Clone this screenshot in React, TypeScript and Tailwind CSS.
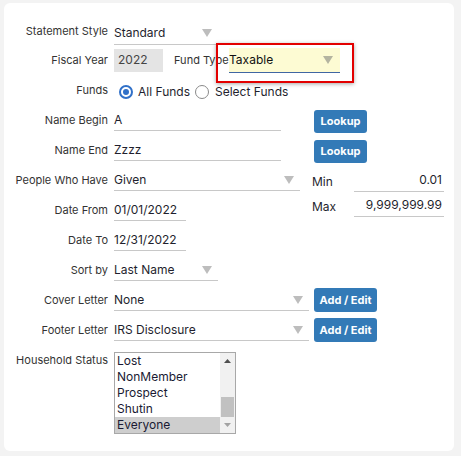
import type { ReactNode } from 'react';

const font = { fontFamily: 'Inter, "Noto Sans", sans-serif' };

function Arrow({ className = 'fill-[#bdbdbd]' }: { className?: string }) {
  return (
    <svg width="10" height="8" viewBox="0 0 10 8" className={className}>
      <polygon points="0,0 10,0 5,8" />
    </svg>
  );
}

function Row({
  label,
  children,
  className = 'h-[30px] items-center',
}: {
  label: string;
  children: ReactNode;
  className?: string;
}) {
  return (
    <div className={`flex ${className}`}>
      <div className="w-[104px] shrink-0 whitespace-nowrap text-right text-[11px] text-[#333]">
        {label}
      </div>
      <div className="ml-[6px] flex items-center">{children}</div>
    </div>
  );
}

function Field({ width, value, arrow = false }: { width: string; value: string; arrow?: boolean }) {
  return (
    <div
      className={`flex h-[22px] items-center justify-between border-b border-[#c8c8c8] pr-[6px] text-[12px] text-[#1f1f2e] ${width}`}
    >
      <span>{value}</span>
      {arrow && <Arrow />}
    </div>
  );
}

function Btn({ children, width }: { children: ReactNode; width: string }) {
  return (
    <button
      className={`flex h-[23px] items-center justify-center rounded-[3px] bg-[#337ab7] text-[11px] font-bold text-white ${width}`}
    >
      {children}
    </button>
  );
}

function Radio({ checked }: { checked?: boolean }) {
  return checked ? (
    <span className="flex h-[14px] w-[14px] items-center justify-center rounded-full border-2 border-[#3070c8] bg-white">
      <span className="h-[6px] w-[6px] rounded-full bg-[#3070c8]" />
    </span>
  ) : (
    <span className="block h-[14px] w-[14px] rounded-full border border-[#8a8a8a] bg-white" />
  );
}

const statuses = ['Lost', 'NonMember', 'Prospect', 'Shutin', 'Everyone'];

export default function App() {
  return (
    <div className="h-[456px] w-[461px] bg-[#f3f3f3] pl-[4px] pt-[3px]" style={font}>
      <div className="h-[448px] w-[450px] rounded-[6px] bg-white pt-[15px]">
        <Row label="Statement Style" className="h-[27px] items-center">
          <div className="mt-[3px] flex h-[24px] w-[104px] items-center justify-between border-b border-[#c8c8c8] pr-[6px] text-[12px] text-[#1f1f2e]">
            <span>Standard</span>
            <Arrow />
          </div>
        </Row>

        <Row label="Fiscal Year">
          <div className="flex h-[23px] w-[49px] items-center bg-[#e4e4e4] pl-[4px] text-[12px] text-[#444]">
            2022
          </div>
          <span className="w-[66px] pl-[11px] text-[11px] text-[#333]">Fund Type</span>
          <div className="relative">
            <div className="flex h-[25px] w-[111px] items-center justify-between border-b border-[#3f66a3] bg-[#fdfbd3] pr-[7px] text-[12px] text-[#111]">
              <span>Taxable</span>
              <Arrow className="fill-[#b4b4a0]" />
            </div>
            <div className="pointer-events-none absolute -bottom-[10px] -left-[13px] -right-[14px] -top-[5px] border-2 border-[#e30000] shadow-[0_1px_4px_rgba(0,0,0,0.35)]" />
          </div>
        </Row>

        <Row label="Funds">
          <div className="mt-[3px] flex items-center text-[12px] text-[#1f1f2e]">
            <span className="ml-[5px]">
              <Radio checked />
            </span>
            <span className="ml-[5px]">All Funds</span>
            <span className="ml-[5px]">
              <Radio />
            </span>
            <span className="ml-[6px]">Select Funds</span>
          </div>
        </Row>

        <Row label="Name Begin">
          <Field width="w-[167px]" value="A" />
          <div className="ml-[33px] mt-[3px]">
            <Btn width="w-[53px]">Lookup</Btn>
          </div>
        </Row>

        <Row label="Name End">
          <Field width="w-[167px]" value="Zzzz" />
          <div className="ml-[33px] mt-[3px]">
            <Btn width="w-[53px]">Lookup</Btn>
          </div>
        </Row>

        <div className="flex">
          <div>
            <Row label="People Who Have">
              <Field width="w-[186px]" value="Given" arrow />
            </Row>
            <Row label="Date From">
              <Field width="w-[72px]" value="01/01/2022" />
            </Row>
          </div>
          <div className="ml-[12px] mt-[2px] text-[12px] text-[#1f1f2e]">
            {[
              ['Min', '0.01'],
              ['Max', '9,999,999.99'],
            ].map(([k, v]) => (
              <div key={k} className="flex h-[25px] items-center">
                <span className="w-[42px] pt-[4px]">{k}</span>
                <span className="flex h-[25px] w-[90px] items-center justify-end border-b border-[#c8c8c8] pr-[2px] pt-[1px]">
                  {v}
                </span>
              </div>
            ))}
          </div>
        </div>

        <Row label="Date To">
          <Field width="w-[72px]" value="12/31/2022" />
        </Row>

        <Row label="Sort by">
          <Field width="w-[104px]" value="Last Name" arrow />
        </Row>

        <Row label="Cover Letter">
          <Field width="w-[195px]" value="None" arrow />
          <div className="ml-[5px]">
            <Btn width="w-[63px] h-[24px]">Add / Edit</Btn>
          </div>
        </Row>

        <Row label="Footer Letter">
          <Field width="w-[195px]" value="IRS Disclosure" arrow />
          <div className="ml-[5px]">
            <Btn width="w-[63px] h-[24px]">Add / Edit</Btn>
          </div>
        </Row>

        <Row label="Household Status" className="mt-[7px] items-start">
          <div className="flex h-[82px] w-[122px] border border-[#a8a8a8] bg-white">
            <div className="flex-1 text-[12px] leading-[16px] text-[#1a1a33]">
              {statuses.map((s) => (
                <div key={s} className={`pl-[2px] ${s === 'Everyone' ? 'bg-[#cecece]' : ''}`}>
                  {s}
                </div>
              ))}
            </div>
            <div className="flex w-[15px] flex-col items-center bg-[#f1f1f1]">
              <div className="flex h-[15px] items-center justify-center">
                <svg width="7" height="4" viewBox="0 0 7 4" className="fill-[#505050]">
                  <polygon points="0,4 7,4 3.5,0" />
                </svg>
              </div>
              <div className="mt-[29px] h-[20px] w-[13px] bg-[#c1c1c1]" />
              <div className="flex h-[15px] items-center justify-center">
                <svg width="7" height="4" viewBox="0 0 7 4" className="fill-[#a3a3a3]">
                  <polygon points="0,0 7,0 3.5,4" />
                </svg>
              </div>
            </div>
          </div>
        </Row>
      </div>
    </div>
  );
}
